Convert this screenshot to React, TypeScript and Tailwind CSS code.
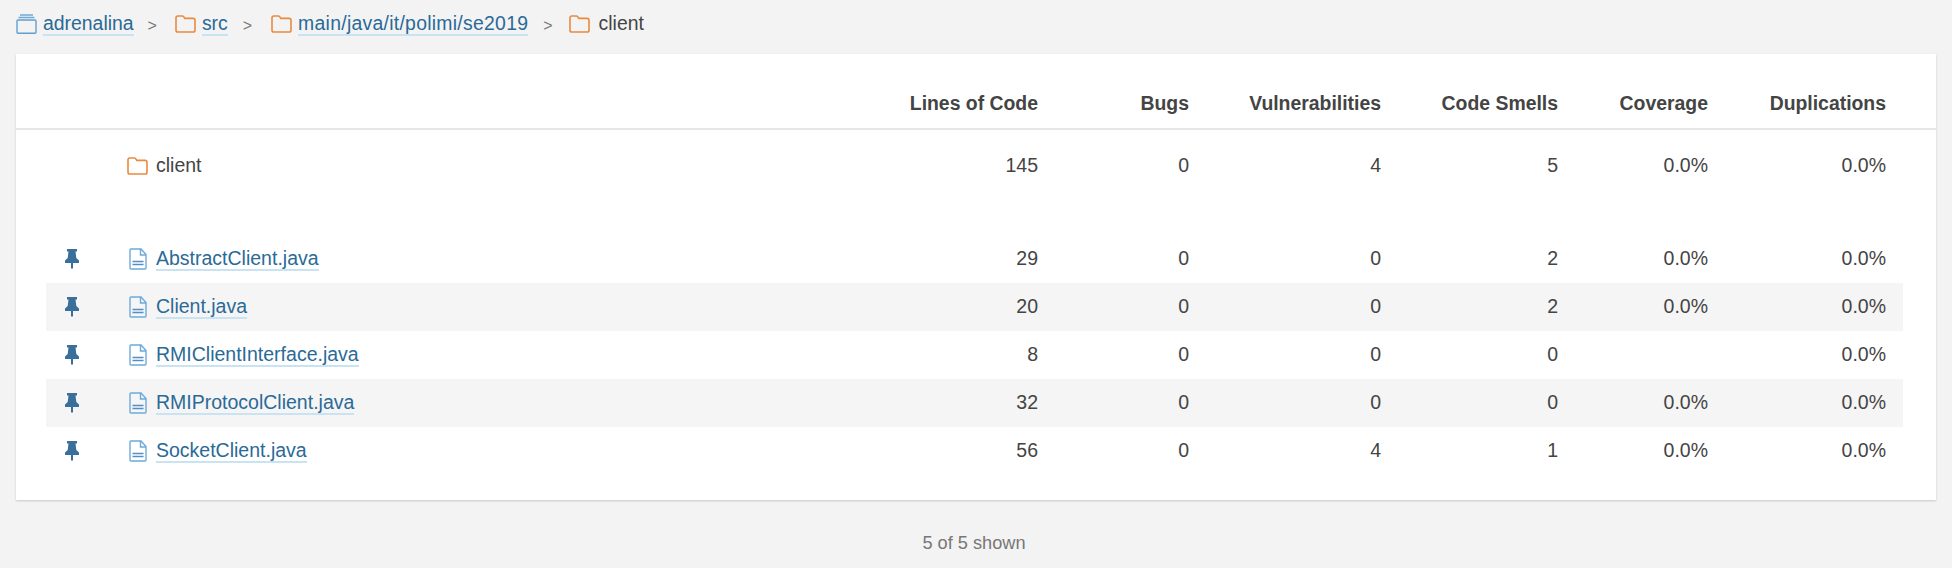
import React from 'react';

const FILES = [
    { name: 'AbstractClient.java', loc: '29', bugs: '0', vulns: '0', smells: '2', coverage: '0.0%', dups: '0.0%' },
    { name: 'Client.java', loc: '20', bugs: '0', vulns: '0', smells: '2', coverage: '0.0%', dups: '0.0%' },
    { name: 'RMIClientInterface.java', loc: '8', bugs: '0', vulns: '0', smells: '0', coverage: '', dups: '0.0%' },
    { name: 'RMIProtocolClient.java', loc: '32', bugs: '0', vulns: '0', smells: '0', coverage: '0.0%', dups: '0.0%' },
    { name: 'SocketClient.java', loc: '56', bugs: '0', vulns: '4', smells: '1', coverage: '0.0%', dups: '0.0%' },
];

const COLUMNS = 'grid grid-cols-[82px_827px_100px_151px_192px_177px_150px_178px] items-center';

const FolderIcon = () => (
    <svg width="21" height="18" viewBox="0 0 21 18" fill="none" className="shrink-0">
        <path d="M1 2.800C1 1.700 1.700 1 2.800 1h4.400c.8 0 1.200.3 1.600.9l1 1.500h8.400c1.100 0 1.800.7 1.800 1.800v10c0 1.100-.7 1.800-1.800 1.800H2.800C1.700 17 1 16.300 1 15.200z" stroke="#ea8a3e" strokeWidth="1.600" />
    </svg>
);

const FileIcon = () => (
    <svg width="18" height="22" viewBox="0 0 18 22" fill="none" className="shrink-0">
        <path d="M1 2c0-.6.4-1 1-1h10l5 5.500V20c0 .6-.4 1-1 1H2c-.6 0-1-.4-1-1z" stroke="#6fa9d8" strokeWidth="1.400" />
        <path d="M11.500 1v6H17" stroke="#6fa9d8" strokeWidth="1.400" />
        <path d="M3.500 13.500h11M3.500 16.500h11" stroke="#4f90c6" strokeWidth="1.500" />
    </svg>
);

const RepoIcon = () => (
    <svg width="21" height="20" viewBox="0 0 21 20" fill="none" className="shrink-0">
        <path d="M4 1h13M2.500 3.500h16" stroke="#6fa9d8" strokeWidth="1.300" />
        <rect x="1" y="6" width="19" height="13.300" rx="1" stroke="#5f9fd2" strokeWidth="1.400" />
    </svg>
);

const PinIcon = () => (
    <svg width="14" height="20" viewBox="0 0 14 20" fill="#3a6f9b" className="shrink-0">
        <path d="M2 0h10v2.500h-1.500l.8 6.500 2.700 2.500v2.500H8V19l-1 1-1-1v-5H0v-2.500L2.700 9l.8-6.500H2z" />
    </svg>
);

const Sep = ({ left, right }: { left: string; right: string }) => (
    <span className={`text-[#777] text-[16px] mt-[3px] ${left} ${right}`}>&gt;</span>
);

export default function App() {
    return (
        <div className="min-h-[568px] bg-[#f3f3f3] font-['Liberation_Sans',sans-serif] text-[19.500px] text-[#444] px-4">
            {/* Breadcrumbs */}
            <div className="flex items-center h-[54px] pb-[6px] text-[19.400px]">
                <RepoIcon />
                <span className="ml-[6px]"><a className="text-[#2a6a97] border-b-2 border-[#cae3f2] leading-[22px]">adrenalina</a></span>
                <Sep left="ml-[14px]" right="mr-[18px]" />
                <FolderIcon />
                <span className="ml-[6px]"><a className="text-[#2a6a97] border-b-2 border-[#cae3f2] leading-[22px]">src</a></span>
                <Sep left="ml-[15px]" right="mr-[19px]" />
                <FolderIcon />
                <span className="ml-[6px]"><a className="text-[#2a6a97] border-b-2 border-[#cae3f2] leading-[22px] tracking-[0.27px]">main/java/it/polimi/se2019</a></span>
                <Sep left="ml-[15px]" right="mr-[16px]" />
                <FolderIcon />
                <span className="ml-[9px]">client</span>
            </div>

            {/* Table card */}
            <div className="bg-white h-[446px] pl-[30px] pr-[33px] shadow-[0_1px_2px_rgba(0,0,0,0.18)]">
                <div className="-ml-[30px] -mr-[33px] pl-[30px] pr-[33px] h-[76px] pb-[4px] border-b-2 border-[#e6e6e6] font-bold text-[19.400px]">
                    <div className={`${COLUMNS} h-full pt-[30px] text-right`}>
                        <span />
                        <span />
                        <span className="pr-[17px] whitespace-nowrap justify-self-end">Lines of Code</span>
                        <span className="pr-[17px]">Bugs</span>
                        <span className="pr-[17px]">Vulnerabilities</span>
                        <span className="pr-[17px]">Code Smells</span>
                        <span className="pr-[17px]">Coverage</span>
                        <span className="pr-[17px]">Duplications</span>
                    </div>
                </div>

                <div className={`${COLUMNS} h-[48px] mt-[12px] mb-[45px] text-right`}>
                    <span />
                    <span className="flex items-center gap-[8px] text-left -ml-[1px]"><FolderIcon />client</span>
                    <span className="pr-[17px]">145</span>
                    <span className="pr-[17px]">0</span>
                    <span className="pr-[17px]">4</span>
                    <span className="pr-[17px]">5</span>
                    <span className="pr-[17px]">0.0%</span>
                    <span className="pr-[17px]">0.0%</span>
                </div>

                {FILES.map((file, index) => (
                    <div key={file.name} className={`${COLUMNS} h-[48px] text-right ${index % 2 === 1 ? 'bg-[#f5f5f5]' : ''}`}>
                        <span className="flex pl-[19px]"><PinIcon /></span>
                        <span className="flex items-center gap-[9px] text-left pl-[1px]">
                            <FileIcon />
                            <a className="text-[#2a6a97] border-b-2 border-[#cae3f2] leading-[22px]">{file.name}</a>
                        </span>
                        <span className="pr-[17px]">{file.loc}</span>
                        <span className="pr-[17px]">{file.bugs}</span>
                        <span className="pr-[17px]">{file.vulns}</span>
                        <span className="pr-[17px]">{file.smells}</span>
                        <span className="pr-[17px]">{file.coverage}</span>
                        <span className="pr-[17px]">{file.dups}</span>
                    </div>
                ))}
            </div>

            <div className="text-center text-[#777] text-[18.200px] mt-[30px] pr-[4px]">5 of 5 shown</div>
        </div>
    );
}
